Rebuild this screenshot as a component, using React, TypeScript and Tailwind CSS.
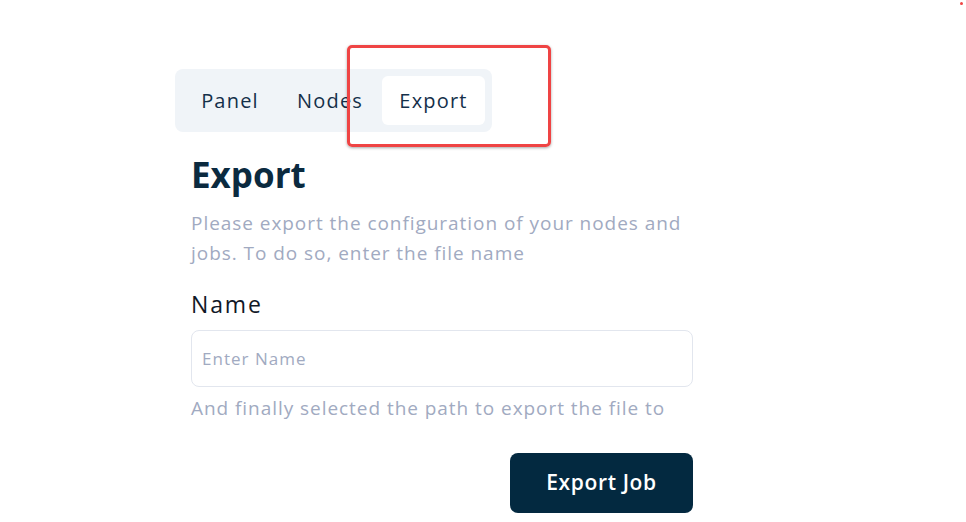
import React, { useState } from 'react';

const tabs = [
  { label: 'Panel', width: 'w-[96px]' },
  { label: 'Nodes', width: 'w-[104px]' },
  { label: 'Export', width: 'w-[103px]' },
];

const App = () => {
  const [active, setActive] = useState('Export');
  const [name, setName] = useState('');

  return (
    <div
      className="relative min-h-[522px] w-full bg-white pl-[175px] pt-[69px] text-[#0b2a3f]"
      style={{ fontFamily: '"Open Sans", "Liberation Sans", sans-serif' }}
    >
      {/* red highlight around the active tab */}
      <div className="absolute left-[347px] top-[45px] h-[102px] w-[204px] rounded-[5px] border-[3px] border-[#ef4444] shadow-[0_1px_3px_rgba(0,0,0,0.35)]" />
      <div className="absolute right-[3px] top-[2px] h-[3px] w-[3px] rounded-full bg-[#ef4444]" />

      <div className="inline-flex h-[63px] w-[317px] items-center rounded-lg bg-[#f0f4f8] px-[7px]">
        {tabs.map((tab) => (
          <button
            key={tab.label}
            onClick={() => setActive(tab.label)}
            className={
              active === tab.label
                ? `h-[49px] ${tab.width} rounded-md bg-white text-[20px] tracking-[0.06em] text-[#14304a]`
                : `h-[49px] ${tab.width} rounded-md text-[20px] tracking-[0.06em] text-[#14304a]`
            }
          >
            {tab.label}
          </button>
        ))}
      </div>

      <div className="ml-4 w-[502px]">
        <h1 className="mt-[20px] text-[35px] font-bold leading-[46px]">Export</h1>
        <p className="mt-[10px] text-[19px] leading-[30px] tracking-[0.05em] text-[#a1aac1]">
          Please export the configuration of your nodes and jobs. To do so, enter the file name
        </p>

        <label className="mt-[21px] block text-[23px] leading-[30px] tracking-[0.08em] text-[#111827]">Name</label>
        <input
          value={name}
          onChange={(e) => setName(e.target.value)}
          placeholder="Enter Name"
          className="mt-[11px] h-[57px] w-full rounded-lg border border-[#e2e6ee] px-[10px] text-[17px] tracking-[0.06em] outline-none placeholder:text-[#a1aac1]"
        />
        <p className="mt-[6px] text-[19px] leading-[30px] tracking-[0.05em] text-[#a1aac1]">
          And finally selected the path to export the file to
        </p>

        <div className="mt-[30px] flex justify-end">
          <button className="h-[60px] w-[183px] rounded-lg bg-[#032940] text-[21px] font-semibold tracking-[0.03em] text-white">
            Export Job
          </button>
        </div>
      </div>
    </div>
  );
};

export default App;
